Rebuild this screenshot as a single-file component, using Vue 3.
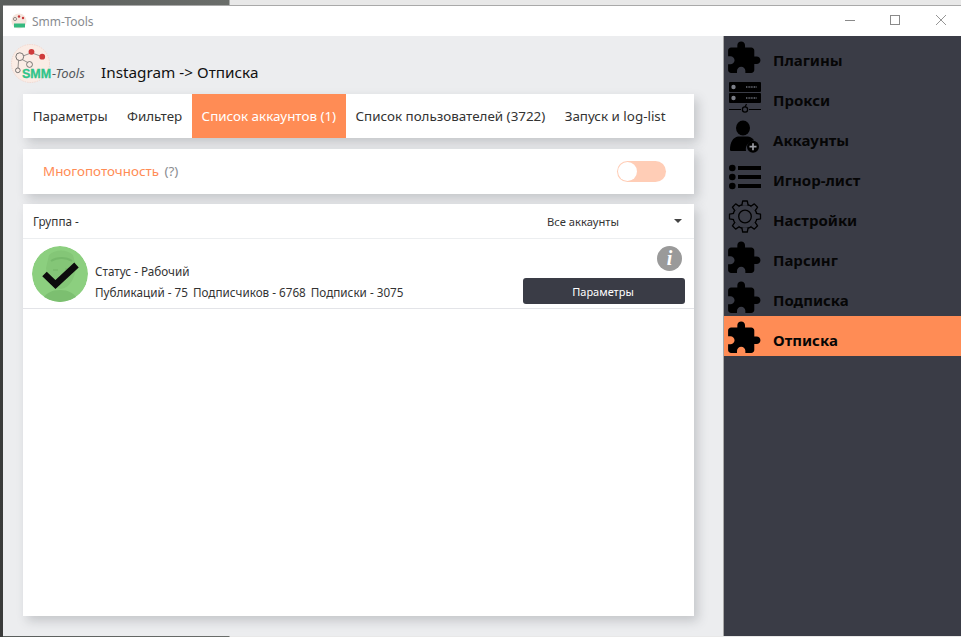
<script setup>
const tabs = [
  { label: 'Параметры' },
  { label: 'Фильтер' },
  { label: 'Список аккаунтов (1)', active: true },
  { label: 'Список пользователей (3722)' },
  { label: 'Запуск и log-list' }
]
const nav = [
  { label: 'Плагины', icon: 'puzzle' },
  { label: 'Прокси', icon: 'server' },
  { label: 'Аккаунты', icon: 'user' },
  { label: 'Игнор-лист', icon: 'list' },
  { label: 'Настройки', icon: 'gear' },
  { label: 'Парсинг', icon: 'puzzle' },
  { label: 'Подписка', icon: 'puzzle' },
  { label: 'Отписка', icon: 'puzzle', active: true }
]
const puzzle = 'M20.5 11H19V7c0-1.1-.9-2-2-2h-4V3.5C13 2.12 11.88 1 10.5 1S8 2.12 8 3.5V5H4c-1.1 0-1.99.9-1.99 2v3.8H3.5c1.49 0 2.7 1.21 2.7 2.7s-1.21 2.7-2.7 2.7H2V20c0 1.1.9 2 2 2h3.8v-1.5c0-1.49 1.21-2.7 2.7-2.7 1.49 0 2.7 1.21 2.7 2.7V22H17c1.1 0 2-.9 2-2v-4h1.5c1.38 0 2.5-1.12 2.5-2.5S21.88 11 20.5 11z'
const gearTeeth = Array.from({ length: 8 }, (_, i) => i * 45)
</script>

<template>
  <div class="desktop">
    <div class="window">
      <header class="titlebar">
        <div class="app-title">
          <svg class="app-icon" viewBox="0 0 16 16">
            <circle cx="8" cy="8" r="7.6" fill="#f5e6de" />
            <circle cx="4" cy="6" r="1.6" fill="none" stroke="#555" stroke-width=".6" />
            <circle cx="8" cy="3.5" r="1.2" fill="#c8383a" />
            <circle cx="12" cy="5" r="1.2" fill="#c8383a" />
            <rect x="3" y="10.5" width="11" height="4" fill="#35b97f" />
          </svg>
          <span>Smm-Tools</span>
        </div>
        <div class="win-controls">
          <svg width="12" height="12" viewBox="0 0 12 12"><path d="M1 6.500h10" stroke="#8a8a8a" fill="none" /></svg>
          <svg width="12" height="12" viewBox="0 0 12 12"><rect x="1.500" y="1.500" width="9" height="9" stroke="#8a8a8a" fill="none" /></svg>
          <svg width="12" height="12" viewBox="0 0 12 12"><path d="M2 1l10 10M12 1L2 11" stroke="#8a8a8a" fill="none" stroke-width=".9" /></svg>
        </div>
      </header>
      <div class="body">
        <main class="main">
          <div class="head">
            <div class="logo">
              <svg class="logo-art" viewBox="0 0 40 40">
                <circle cx="20" cy="20" r="19.5" fill="#faece5" stroke="#f3c9bc" stroke-width=".6" stroke-dasharray="1.500 1" />
                <path d="M8 14L21 9L32 13M8 14L19 20M8 14L7 27" stroke="#666" stroke-width=".7" fill="none" />
                <circle cx="9" cy="13" r="4" fill="#faece5" stroke="#555" stroke-width=".8" />
                <circle cx="21" cy="8" r="3" fill="#cf3b3b" />
                <circle cx="32" cy="13" r="3" fill="#cf3b3b" />
                <circle cx="19" cy="21" r="3" fill="#faece5" stroke="#555" stroke-width=".8" />
                <circle cx="7" cy="27" r="2.400" fill="#faece5" stroke="#555" stroke-width=".8" />
              </svg>
              <span class="logo-smm">SMM</span>
              <span class="logo-tools">-Tools</span>
            </div>
            <h1 class="page-title">Instagram -&gt; Отписка</h1>
          </div>

          <nav class="tabs card">
            <a v-for="tab in tabs" :key="tab.label" class="tab" :class="{ active: tab.active }">{{ tab.label }}</a>
          </nav>

          <section class="switch-row card">
            <span class="switch-label">Многопоточность <em>(?)</em></span>
            <span class="switch"><span class="knob"></span></span>
          </section>

          <section class="list card">
            <div class="group-row">
              <span>Группа -</span>
              <div class="select">
                <span>Все аккаунты</span>
                <i class="caret"></i>
              </div>
            </div>
            <article class="account">
              <div class="avatar">
                <svg viewBox="0 0 56 56" width="56" height="56">
                  <circle cx="28" cy="28" r="28" fill="#8ccf7f" />
                  <path d="M17 9c6-6 18-6 24 0l3 12c-1 10-5 20-15 22c-9-1-14-11-15-21z" fill="#84c677" />
                  <path d="M19 15c6-4 15-4 21 0" stroke="#76b96b" stroke-width="2" fill="none" />
                  <path d="M21 24h5M33 23h5" stroke="#72b467" stroke-width="1.200" />
                  <path d="M10 56c2-9 10-12 18-12s16 3 18 12z" fill="#7cbf70" />
                  <path d="M12.500 28L23.500 38.500L44.500 19" stroke="#0c0c0c" stroke-width="6.500" fill="none" />
                </svg>
              </div>
              <div class="info">
                <div>Статус - Рабочий</div>
                <div class="stats">
                  <span>Публикаций - 75</span>
                  <span>Подписчиков - 6768</span>
                  <span>Подписки - 3075</span>
                </div>
              </div>
              <div class="actions">
                <span class="info-badge">i</span>
                <button class="params-btn">Параметры</button>
              </div>
            </article>
          </section>
        </main>

        <aside class="sidebar">
          <a v-for="item in nav" :key="item.label" class="nav-item" :class="{ active: item.active }">
            <span class="nav-icon">
              <svg v-if="item.icon === 'puzzle'" class="ico puzzle" viewBox="0 0 24 24" preserveAspectRatio="none"><path :d="puzzle" fill="#000" /></svg>
              <svg v-else-if="item.icon === 'server'" class="ico" viewBox="0 0 38 36">
                <rect x="4" y="4" width="32" height="10" rx="1" fill="#000" />
                <rect x="4" y="15" width="32" height="10" rx="1" fill="#000" />
                <circle cx="8.500" cy="9" r="2.200" fill="#7c7f88" />
                <circle cx="8.500" cy="20" r="2.200" fill="#7c7f88" />
                <path d="M21 9h11M21 20h11" stroke="#6a6d75" stroke-width="1.400" stroke-dasharray="1 .6" />
                <path d="M4 31.500h12M24 31.500h12M21.500 26l-1.500 3" stroke="#000" stroke-width="1.200" fill="none" />
                <circle cx="20" cy="31.500" r="2.600" fill="none" stroke="#000" stroke-width="1.300" />
              </svg>
              <svg v-else-if="item.icon === 'user'" class="ico" viewBox="0 0 38 36">
                <ellipse cx="18" cy="10" rx="7" ry="7.500" fill="#000" />
                <path d="M5 32c0-8 3-12.500 8-13.500h10c3 .6 5 2 6 4-5 .5-9 5-8 10.500H7c-1.200 0-2-.4-2-1z" fill="#000" />
                <circle cx="28" cy="28.700" r="6" fill="#000" />
                <path d="M24.500 28.700h7M28 25.200v7" stroke="#9a9ca3" stroke-width="1.700" />
              </svg>
              <svg v-else-if="item.icon === 'list'" class="ico" viewBox="0 0 38 36">
                <circle cx="7.300" cy="10" r="3.300" fill="#000" />
                <circle cx="7.300" cy="19" r="3.300" fill="#000" />
                <circle cx="7.300" cy="28" r="3.300" fill="#000" />
                <path d="M13 10h23M13 19h23M13 28h23" stroke="#000" stroke-width="4.200" />
              </svg>
              <svg v-else class="ico" viewBox="0 0 38 36">
                <g fill="none" stroke="#000" stroke-width="1.300" stroke-linejoin="round">
                  <circle cx="20" cy="18.500" r="6.300" />
                  <circle cx="20" cy="18.500" r="12" />
                  <g fill="#3a3c46">
                    <path v-for="a in gearTeeth" :key="a" :transform="`rotate(${a} 20 18.500)`" d="M16.800 7.500L17.700 3h4.600l.9 4.500" />
                  </g>
                </g>
              </svg>
            </span>
            <span class="nav-label">{{ item.label }}</span>
          </a>
        </aside>
      </div>
    </div>
  </div>
</template>

<style>
html, body { margin: 0; padding: 0; }
</style>

<style scoped>
.desktop {
  width: 961px;
  height: 637px;
  box-sizing: border-box;
  padding: 5px 0 1px 3px;
  overflow: hidden;
  background:
    linear-gradient(180deg, #5c605e 0, #3c3e3d 120px, #3a3b3a 637px) left / 3px 100% no-repeat,
    linear-gradient(90deg, #5a5e5c 0, #6a6d6a 229px, #e8e8e8 230px);
  font-family: "Noto Sans", "Open Sans", sans-serif;
}
.window {
  width: 958px;
  height: 631px;
  display: flex;
  flex-direction: column;
  background: #fff;
  border-top: 1px solid #a9a9a9;
  box-sizing: border-box;
}
.titlebar {
  height: 30px;
  flex: none;
  display: flex;
  align-items: center;
  justify-content: space-between;
  background: #fff;
}
.app-title {
  display: flex;
  align-items: center;
  gap: 5px;
  padding-left: 8px;
  font-size: 12px;
  color: #888b90;
}
.app-icon { width: 16px; height: 16px; }
.win-controls {
  display: flex;
  gap: 33px;
  padding: 0 15px 2px 0;
}
.body { flex: 1; display: flex; min-height: 0; }
.main {
  width: 720px;
  flex: none;
  box-sizing: border-box;
  padding: 0 29px 20px 20px;
  background: #ecedef;
  display: flex;
  flex-direction: column;
}
.head {
  height: 58px;
  flex: none;
  display: flex;
  align-items: flex-start;
  position: relative;
}
.logo {
  width: 78px;
  height: 58px;
  position: relative;
  flex: none;
}
.logo-art {
  position: absolute;
  left: -12px;
  top: 8px;
  width: 39px;
  height: 39px;
}
.logo-smm {
  position: absolute;
  left: -1px;
  top: 28px;
  font: 700 12.500px/20px "Liberation Sans", sans-serif;
  -webkit-text-stroke: .3px #2fc489;
  color: #2fc489;
}
.logo-tools {
  position: absolute;
  left: 29px;
  top: 28px;
  font: italic 13px/18px "Noto Sans", sans-serif;
  color: #55585c;
}
.page-title {
  margin: 26px 0 0;
  font-size: 15.300px;
  font-weight: 400;
  line-height: 20px;
  color: #111;
}
.card {
  background: #fff;
  box-shadow: 4px 5px 10px rgba(60, 64, 75, .22);
}
.tabs {
  height: 44px;
  display: flex;
  flex: none;
  font-size: 13.400px;
  color: #333;
}
.tab {
  padding: 0 9.700px;
  display: flex;
  align-items: center;
}
.tab.active { background: #ff8c55; color: #fff; }
.switch-row {
  margin-top: 11px;
  height: 45px;
  flex: none;
  display: flex;
  align-items: center;
  justify-content: space-between;
  padding: 0 28px 2px 20px;
  box-sizing: border-box;
  font-size: 13.400px;
  color: #ff8c55;
}
.switch-label em { font-style: normal; color: #8a8d92; margin-left: 2px; }
.switch {
  width: 49px;
  height: 21px;
  margin-top: 1px;
  border-radius: 11px;
  background: #ffcdb6;
  position: relative;
}
.knob {
  position: absolute;
  left: 1px;
  top: 1px;
  width: 19px;
  height: 19px;
  border-radius: 50%;
  background: #fff;
}
.list {
  margin-top: 10px;
  flex: 1;
  font-size: 11.700px;
  color: #333;
}
.group-row {
  height: 34px;
  display: flex;
  align-items: center;
  justify-content: space-between;
  padding: 0 12px 0 10px;
  border-bottom: 1px solid #eceef0;
}
.select {
  width: 135px;
  display: flex;
  align-items: center;
  justify-content: space-between;
  font-size: 11.200px;
}
.caret {
  width: 0;
  height: 0;
  border: 4px solid transparent;
  border-top: 4px solid #444;
  border-bottom: 0;
}
.account {
  height: 70px;
  box-sizing: border-box;
  display: flex;
  align-items: flex-start;
  padding: 7px 9px 0;
  border-bottom: 1px solid #e3e4e8;
}
.avatar { width: 56px; height: 56px; flex: none; }
.avatar svg { display: block; clip-path: circle(50%); }
.info {
  margin-left: 7px;
  padding-top: 15px;
  flex: 1;
  line-height: 21px;
}
.stats { display: flex; gap: 5px; }
.actions {
  width: 162px;
  display: flex;
  flex-direction: column;
  align-items: flex-end;
  gap: 7px;
}
.info-badge {
  width: 25px;
  height: 25px;
  margin-right: 3px;
  border-radius: 50%;
  background: #9a9a9a;
  color: #fff;
  font: italic 700 20px/25px "Liberation Serif", serif;
  text-align: center;
}
.params-btn {
  width: 162px;
  height: 26px;
  padding: 0 2px 0 0;
  border: 0;
  border-radius: 3px;
  background: #3a3c46;
  color: #fff;
  font: 11px "Noto Sans", sans-serif;
}
.sidebar {
  flex: 1;
  background: #3a3c46;
  border-left: 1px solid #a8a8a8;
  display: flex;
  flex-direction: column;
}
.nav-item {
  height: 40px;
  flex: none;
  display: flex;
  align-items: center;
  color: #060606;
  font-size: 15px;
  font-weight: 700;
}
.nav-item.active { background: #ff8c55; }
.nav-icon { width: 38px; height: 36px; margin-left: 1px; flex: none; }
.ico { width: 38px; height: 36px; display: block; }
.ico.puzzle { width: 37px; margin-top: 1.500px; }
.nav-label { margin-left: 10px; padding-top: 7px; }
</style>
